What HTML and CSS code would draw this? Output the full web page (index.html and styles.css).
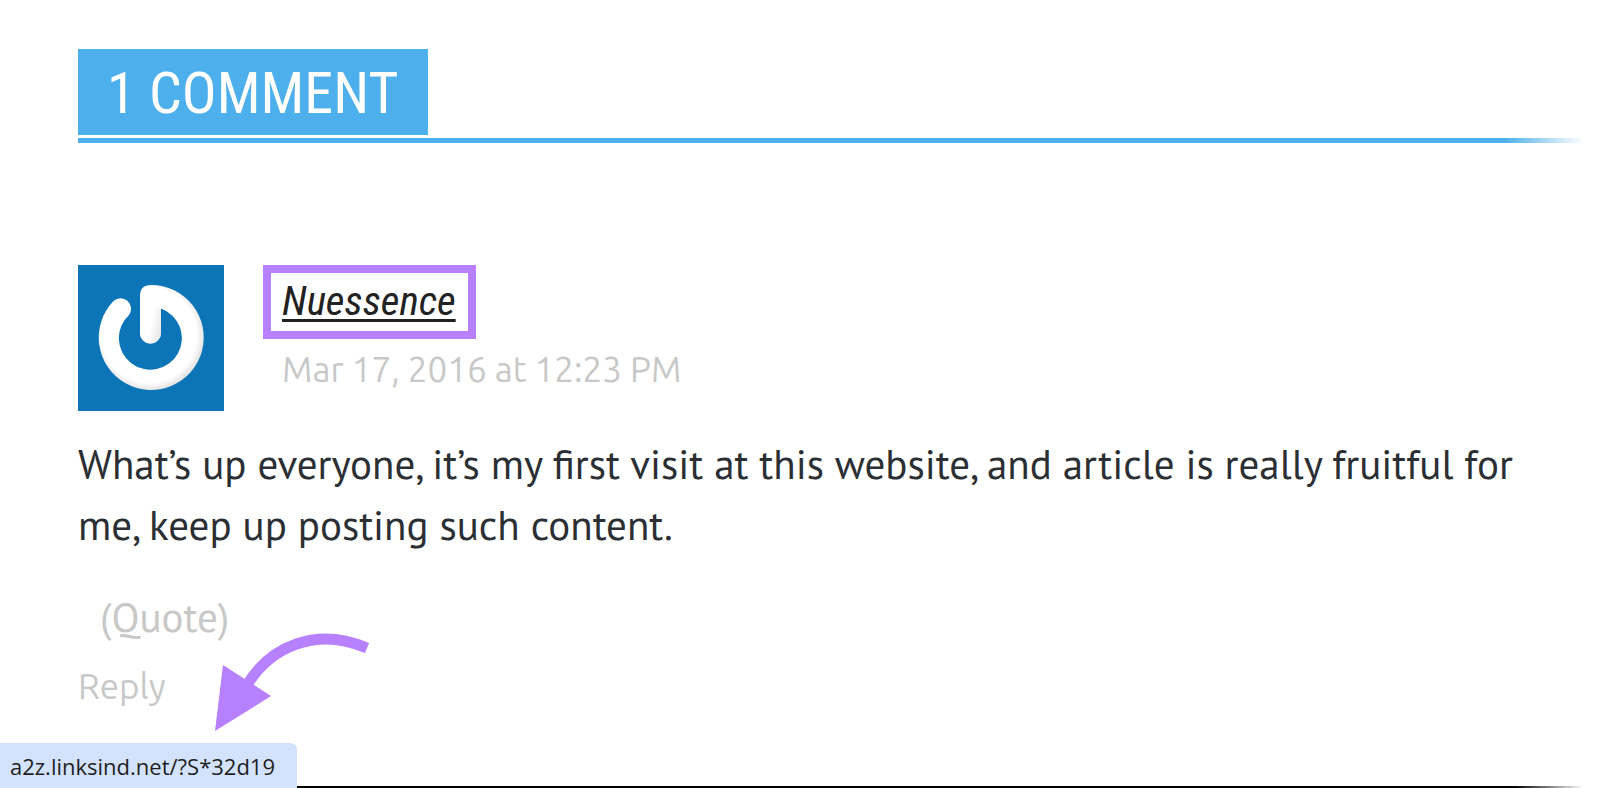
FILE: index.html
```html
<!DOCTYPE html>
<html lang="en">
<head>
    <meta charset="UTF-8">
    <meta name="viewport" content="width=device-width, initial-scale=1.0">
    <title>1 Comment</title>
    <link rel="stylesheet" href="styles.css">
</head>
<body>
<section class="comments">
    <header class="comments-header">
        <h2 class="comments-title">1 Comment</h2>
    </header>

    <article class="comment">
        <div class="comment-meta">
            <svg class="avatar" viewBox="0 0 146 146" aria-hidden="true">
                <defs>
                    <radialGradient id="ring" gradientUnits="userSpaceOnUse" cx="71" cy="70" r="56">
                        <stop offset="0.56" stop-color="#ffffff"/>
                        <stop offset="0.85" stop-color="#ffffff"/>
                        <stop offset="1" stop-color="#e0e0e0"/>
                    </radialGradient>
                    <linearGradient id="stem" gradientUnits="userSpaceOnUse" x1="62" x2="83" y1="60" y2="64">
                        <stop offset="0.5" stop-color="#ffffff"/>
                        <stop offset="1" stop-color="#e8e8e8"/>
                    </linearGradient>
                </defs>
                <rect width="146" height="146" fill="#0b75b7"/>
                <path d="M73 20A52.500 52.500 0 1 1 35.500 36A10.500 10.500 0 0 1 51 50A31.500 31.500 0 1 0 83 43.500V68A10.500 10.500 0 0 1 62 68V31Q62 20 73 20Z" fill="url(#ring)"/>
                <path d="M62 44L83 43.500V68A10.500 10.500 0 0 1 62 68Z" fill="url(#stem)"/>
            </svg>
            <div class="comment-byline">
                <cite class="author"><a href="#">Nuessence</a></cite>
                <time class="comment-date" datetime="2016-03-17T12:23">Mar 17, 2016 at 12:23 PM</time>
            </div>
        </div>

        <p class="comment-text">What’s up everyone, it’s my first visit at this website, and article is really fruitful for me, keep up posting such content.</p>

        <div class="comment-actions">
            <a class="quote" href="#">(Quote)</a>
            <a class="reply" href="#">Reply</a>
            <svg class="arrow" viewBox="0 0 160 102" aria-hidden="true">
                <path d="M33 52C56 14 102 -7 153 15" fill="none" stroke="#b780ff" stroke-width="11"/>
                <path d="M9 32L57 63L1 98Z" fill="#b780ff"/>
            </svg>
        </div>
    </article>
    <hr class="divider">
</section>
<div class="status">a2z.linksind.net/?S*32d19</div>
</body>
</html>
```
FILE: styles.css
```css
body {
    margin: 0;
    background-color: #fff;
    color: #2b2f33;
    font-family: "PT Sans", "Noto Sans", sans-serif;
    overflow: hidden;
}

a {
    color: inherit;
}

.comments {
    padding: 49px 16px 0 78px;
}

/* the rule under the title fades out on the right */
.comments-header {
    padding-bottom: 8px;
    background: linear-gradient(to right, #4dafeb calc(100% - 80px), transparent) bottom / 100% 5px no-repeat;
}

.comments-title {
    display: inline-block;
    vertical-align: top;
    margin: 0;
    padding: 2px 30px 0 29px;
    background-color: #4dafeb;
    color: #fff;
    font-family: "Roboto Condensed", "Liberation Sans Narrow", Roboto, sans-serif;
    font-size: 58px;
    font-weight: 400;
    line-height: 84px;
    text-transform: uppercase;
}

.comment {
    margin-top: 122px;
}

.comment-meta {
    display: flex;
    gap: 39px;
}

.avatar {
    width: 146px;
    height: 146px;
}

.comment-byline {
    display: flex;
    flex-direction: column;
    align-items: flex-start;
}

.author {
    padding: 0 12px 2px 11px;
    border: 8px solid #b780ff;
    color: #222;
    font-family: "Roboto Condensed", "Liberation Sans Narrow", Roboto, sans-serif;
    font-size: 41px;
    line-height: 56px;
}

.author a {
    text-decoration-thickness: 3px;
    text-underline-offset: 4px;
    text-decoration-skip-ink: none;
}

.comment-date {
    padding-left: 19px;
    color: #c8c8c8;
    font-family: Ubuntu, "Noto Sans", sans-serif;
    font-size: 35px;
    line-height: 60px;
}

.comment-text {
    margin: 22px 60px 0 0;
    font-size: 41px;
    line-height: 61px;
}

.comment-actions {
    position: relative;
    display: flex;
    flex-direction: column;
    align-items: flex-start;
    margin-top: 28px;
    color: #c8c8c8;
}

.comment-actions a {
    text-decoration: none;
}

.quote {
    margin-left: 22px;
    font-size: 41px;
    line-height: 68px;
}

.reply {
    font-family: Ubuntu, "Noto Sans", sans-serif;
    font-size: 35px;
    line-height: 70px;
}

.arrow {
    position: absolute;
    left: 136px;
    top: 50px;
    width: 160px;
    height: 102px;
    overflow: visible;
}

.divider {
    height: 3px;
    margin: 65px 0 0;
    border: 0;
    background: linear-gradient(to right, #000 calc(100% - 70px), transparent);
}

/* link preview in the corner of the window */
.status {
    position: fixed;
    left: 0;
    bottom: 0;
    padding: 1px 22px 0 10px;
    border-radius: 0 6px 0 0;
    background-color: #d3e3fd;
    color: #1f1f1f;
    font-family: "Open Sans", "Noto Sans", sans-serif;
    font-size: 22px;
    line-height: 44px;
}
```
